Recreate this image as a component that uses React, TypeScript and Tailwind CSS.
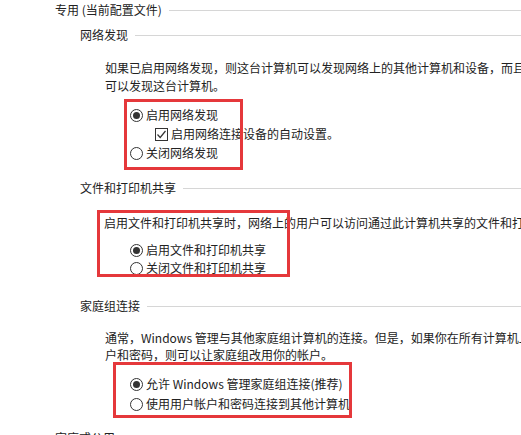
import React from "react";

const font = "font-['Noto_Sans_CJK_SC','Noto_Sans',sans-serif]";

function Radio({ checked }: { checked?: boolean }) {
  return (
    <svg width="13" height="13" viewBox="0 0 13 13" className="shrink-0">
      <circle cx="6.5" cy="6.5" r="6" fill="#fff" stroke="#333" strokeWidth="1" />
      {checked && <circle cx="6.5" cy="6.5" r="3.5" fill="#333" />}
    </svg>
  );
}

function Check() {
  return (
    <svg width="13" height="13" viewBox="0 0 13 13" className="shrink-0">
      <rect x="0.5" y="0.5" width="12" height="12" fill="#fff" stroke="#333" />
      <polyline points="2.5,6.5 5.2,9.5 10.5,3" fill="none" stroke="#333" strokeWidth="1.2" />
    </svg>
  );
}

function Header({ text, indent }: { text: string; indent: string }) {
  return (
    <div className={`flex h-[20px] items-center ${indent}`}>
      <span className="whitespace-nowrap">{text}</span>
      <div className="ml-[7px] h-px flex-1 bg-[#d6d6d6]" />
    </div>
  );
}

function Option({ label, checked }: { label: string; checked?: boolean }) {
  return (
    <div className="flex h-[18px] items-center gap-[3px] pl-[130px] whitespace-nowrap">
      <Radio checked={checked} />
      <span>{label}</span>
    </div>
  );
}

export default function App() {
  return (
    <div
      className={`relative h-[435px] w-[521px] overflow-hidden bg-white text-[12px] leading-none text-[#222] ${font}`}
    >
      <Header text="专用 (当前配置文件)" indent="pl-[55px]" />

      {/* 网络发现 */}
      <div className="mt-[5px]">
        <Header text="网络发现" indent="pl-[80px]" />
        <div className="mt-[14px] pl-[105px] whitespace-nowrap">
          <div className="flex h-[18px] items-center">
            如果已启用网络发现，则这台计算机可以发现网络上的其他计算机和设备，而且其他网络计算机也
          </div>
          <div className="flex h-[18px] items-center">可以发现这台计算机。</div>
        </div>
        <div className="mt-[11px] flex flex-col gap-px">
          <Option label="启用网络发现" checked />
          <div className="flex h-[18px] items-center gap-[3px] pl-[155px] whitespace-nowrap">
            <Check />
            <span>启用网络连接设备的自动设置。</span>
          </div>
          <Option label="关闭网络发现" />
        </div>
      </div>

      {/* 文件和打印机共享 */}
      <div className="mt-[16px]">
        <Header text="文件和打印机共享" indent="pl-[80px]" />
        <div className="mt-[16px] flex h-[18px] items-center pl-[104px] whitespace-nowrap">
          启用文件和打印机共享时，网络上的用户可以访问通过此计算机共享的文件和打印机。
        </div>
        <div className="mt-[9px] pb-[3px] flex flex-col">
          <Option label="启用文件和打印机共享" checked />
          <Option label="关闭文件和打印机共享" />
        </div>
      </div>

      {/* 家庭组连接 */}
      <div className="mt-[16px]">
        <Header text="家庭组连接" indent="pl-[80px]" />
        <div className="mt-[13px] pl-[105px] whitespace-nowrap">
          <div className="flex h-[17px] items-center">
            通常，Windows 管理与其他家庭组计算机的连接。但是，如果你在所有计算机上都拥有相同的用户帐
          </div>
          <div className="flex h-[17px] items-center">户和密码，则可以让家庭组改用你的帐户。</div>
        </div>
        <div className="mt-[12px] flex flex-col gap-[2px]">
          <Option label="允许 Windows 管理家庭组连接(推荐)" checked />
          <Option label="使用用户帐户和密码连接到其他计算机" />
        </div>
      </div>

      <div className="mt-[15px]">
        <Header text="家庭或公用" indent="pl-[55px]" />
      </div>

      {/* red annotation boxes */}
      <div className="absolute left-[124px] top-[99px] h-[71px] w-[119px] border-[3px] border-[#e5383b]" />
      <div className="absolute left-[97px] top-[210px] h-[67px] w-[193px] border-[3px] border-[#e5383b]" />
      <div className="absolute left-[113px] top-[362px] h-[56px] w-[239px] border-[3px] border-[#e5383b]" />
    </div>
  );
}
